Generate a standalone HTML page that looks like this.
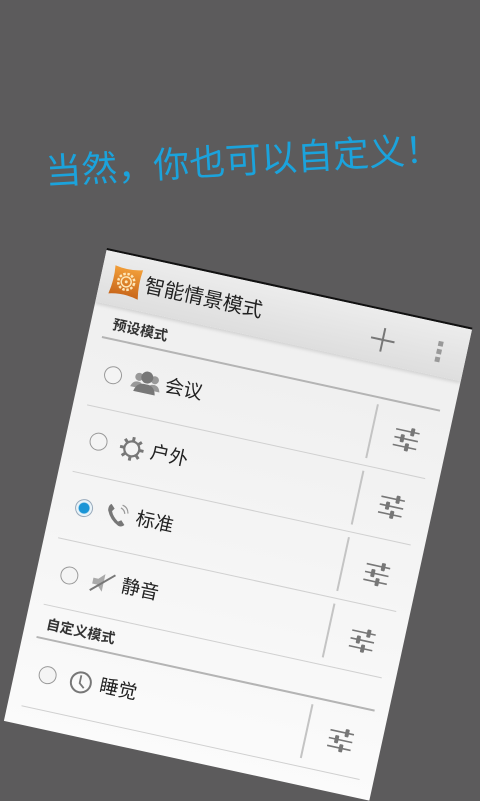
<!DOCTYPE html>
<html><head><meta charset="utf-8"><style>
*{margin:0;padding:0;box-sizing:border-box}
body{width:480px;height:800px;background:#5c5b5c;overflow:hidden;position:relative;font-family:"Liberation Sans","Noto Sans CJK SC",sans-serif}
.h1{position:absolute;left:243px;top:158px;transform:translate(-50%,-50%) rotate(-3.3deg);color:#1ba3dc;font-size:36px;white-space:nowrap;letter-spacing:0px;font-family:"Liberation Sans","Noto Sans CJK SC",sans-serif;font-weight:400}
.card{position:absolute;left:107px;top:248px;width:374px;height:484px;transform-origin:0 0;transform:rotate(12.3deg);background:linear-gradient(#eeeeee,#f4f4f4 50%,#fbfbfb);border-top:2px solid #111;overflow:hidden}
.bar{position:absolute;left:0;top:0;width:374px;height:53px;background:linear-gradient(#ececec,#dedede);box-shadow:0 2px 3px rgba(0,0,0,.12)}
.a{position:absolute}
.t{position:absolute;color:#222;white-space:nowrap;line-height:1}
.line{position:absolute;left:14px;width:346px;height:1px;background:#d0d0d0}
.hl{position:absolute;left:14px;width:346px;height:2px;background:#b4b4b4}
.div{position:absolute;left:297px;width:2px;height:55px;background:#c4c4c4}
.radio{position:absolute;width:18px;height:18px;border-radius:50%;border:1.5px solid #999;background:#f4f4f4}
.it{font-size:19px;left:86px}
</style></head><body>
<div class="h1">当然，你也可以自定义！</div>
<div class="card">
 <div class="bar"></div>
 <svg class="a" style="left:8px;top:10px" width="36" height="34" viewBox="0 0 36 34">
  <defs><linearGradient id="g" x1="0" y1="0" x2="0" y2="1"><stop offset="0" stop-color="#f3a03a"/><stop offset="1" stop-color="#c8661a"/></linearGradient></defs>
  <path d="M4 3 Q18 6 32 2 Q30 17 33 32 Q18 28 3 32 Q6 17 4 3Z" fill="url(#g)"/>
  <circle cx="18" cy="17" r="8" fill="none" stroke="#fde6b8" stroke-width="2.5" stroke-dasharray="2.5 1.6"/>
  <circle cx="18" cy="17" r="5" fill="none" stroke="#fde6b8" stroke-width="1.5"/>
  <circle cx="18" cy="17" r="1.5" fill="#fde6b8"/>
 </svg>
 <div class="t" style="left:45px;top:17px;font-size:20px;color:#222">智能情景模式</div>
 <svg class="a" style="left:276px;top:16px" width="26" height="26"><path d="M13 1V25M1 13H25" stroke="#777" stroke-width="2"/></svg>
 <svg class="a" style="left:343px;top:17px" width="8" height="24"><rect x="1" y="1" width="5" height="5" fill="#999"/><rect x="1" y="9" width="5" height="5" fill="#999"/><rect x="1" y="17" width="5" height="5" fill="#999"/></svg>

 <div class="t" style="left:22px;top:64px;font-size:14px;font-weight:bold;color:#333">预设模式</div>
 <div class="hl" style="top:85px"></div>

 <div class="radio" style="left:24px;top:112px"></div>
 <svg class="a" style="left:52px;top:108px" width="30" height="26" viewBox="0 0 30 26"><circle cx="7" cy="9" r="4" fill="#999"/><circle cx="23" cy="9" r="4" fill="#999"/><path d="M0 20Q2 13 8 14Q12 14 12 20Z M18 20Q18 14 22 14Q28 13 30 20Z" fill="#999"/><circle cx="15" cy="8" r="6" fill="#777"/><path d="M4 24Q6 14 15 15Q24 14 26 24Z" fill="#777"/></svg>
 <div class="t it" style="top:111px">会议</div>
 <div class="div" style="top:93px"></div>
 <div class="line" style="top:155px"></div>

 <div class="radio" style="left:24px;top:180px"></div>
 <svg class="a" style="left:54px;top:176px" width="26" height="26" viewBox="0 0 26 26"><circle cx="13" cy="13" r="7.5" fill="none" stroke="#777" stroke-width="2.2"/><g stroke="#777" stroke-width="3"><path d="M13 1V5M13 21V25M1 13H5M21 13H25M4.5 4.5L7.3 7.3M18.7 18.7L21.5 21.5M4.5 21.5L7.3 18.7M18.7 7.3L21.5 4.5"/></g></svg>
 <div class="t it" style="top:179px">户外</div>
 <div class="div" style="top:161px"></div>
 <div class="line" style="top:223px"></div>

 <div class="radio" style="left:24px;top:248px;border-color:#9ab;background:radial-gradient(circle,#1b95d6 0 5px,#e8f3f9 6px)"></div>
 <svg class="a" style="left:54px;top:244px" width="26" height="26" viewBox="0 0 26 26"><path d="M5 3Q2 5 3 10Q7 19 16 23Q20 24 22 21L18 17L15 19Q9 15 7 10L9 7Z" fill="#777"/><path d="M15 5Q19 6 20 10M16 2Q22 3 23 9" stroke="#999" fill="none" stroke-width="1.2"/></svg>
 <div class="t it" style="top:247px">标准</div>
 <div class="div" style="top:229px"></div>
 <div class="line" style="top:291px"></div>

 <div class="radio" style="left:24px;top:317px"></div>
 <svg class="a" style="left:54px;top:313px" width="26" height="26" viewBox="0 0 26 26"><path d="M3 10H8L14 4V22L8 16H3Z" fill="#aaa"/><path d="M2 23L24 3" stroke="#777" stroke-width="2"/></svg>
 <div class="t it" style="top:316px">静音</div>
 <div class="div" style="top:297px"></div>
 <div class="line" style="top:359px"></div>

 <div class="t" style="left:21px;top:371px;font-size:14px;font-weight:bold;color:#333">自定义模式</div>
 <div class="hl" style="top:392px"></div>

 <div class="radio" style="left:24px;top:419px"></div>
 <svg class="a" style="left:54px;top:415px" width="26" height="26" viewBox="0 0 26 26"><circle cx="13" cy="13" r="10" fill="none" stroke="#777" stroke-width="2"/><path d="M12 6V14L17 18" stroke="#777" stroke-width="1.8" fill="none"/></svg>
 <div class="t it" style="top:418px">睡觉</div>
 <div class="div" style="top:400px"></div>
 <div class="line" style="top:463px"></div>

 <svg class="a" style="left:319px;top:108px" width="28" height="26" viewBox="0 0 28 26"><g stroke="#777" stroke-width="1.6"><path d="M2 5H26M2 13H26M2 21H26"/></g><g fill="#777"><rect x="17" y="1" width="4" height="8" rx="1"/><rect x="8" y="9" width="4" height="8" rx="1"/><rect x="14" y="17" width="4" height="8" rx="1"/></g></svg>
 <svg class="a" style="left:319px;top:177px" width="28" height="26" viewBox="0 0 28 26"><g stroke="#777" stroke-width="1.6"><path d="M2 5H26M2 13H26M2 21H26"/></g><g fill="#777"><rect x="17" y="1" width="4" height="8" rx="1"/><rect x="8" y="9" width="4" height="8" rx="1"/><rect x="14" y="17" width="4" height="8" rx="1"/></g></svg>
 <svg class="a" style="left:319px;top:246px" width="28" height="26" viewBox="0 0 28 26"><g stroke="#777" stroke-width="1.6"><path d="M2 5H26M2 13H26M2 21H26"/></g><g fill="#777"><rect x="17" y="1" width="4" height="8" rx="1"/><rect x="8" y="9" width="4" height="8" rx="1"/><rect x="14" y="17" width="4" height="8" rx="1"/></g></svg>
 <svg class="a" style="left:319px;top:314px" width="28" height="26" viewBox="0 0 28 26"><g stroke="#777" stroke-width="1.6"><path d="M2 5H26M2 13H26M2 21H26"/></g><g fill="#777"><rect x="17" y="1" width="4" height="8" rx="1"/><rect x="8" y="9" width="4" height="8" rx="1"/><rect x="14" y="17" width="4" height="8" rx="1"/></g></svg>
 <svg class="a" style="left:319px;top:416px" width="28" height="26" viewBox="0 0 28 26"><g stroke="#777" stroke-width="1.6"><path d="M2 5H26M2 13H26M2 21H26"/></g><g fill="#777"><rect x="17" y="1" width="4" height="8" rx="1"/><rect x="8" y="9" width="4" height="8" rx="1"/><rect x="14" y="17" width="4" height="8" rx="1"/></g></svg>
</div>
</body></html>
